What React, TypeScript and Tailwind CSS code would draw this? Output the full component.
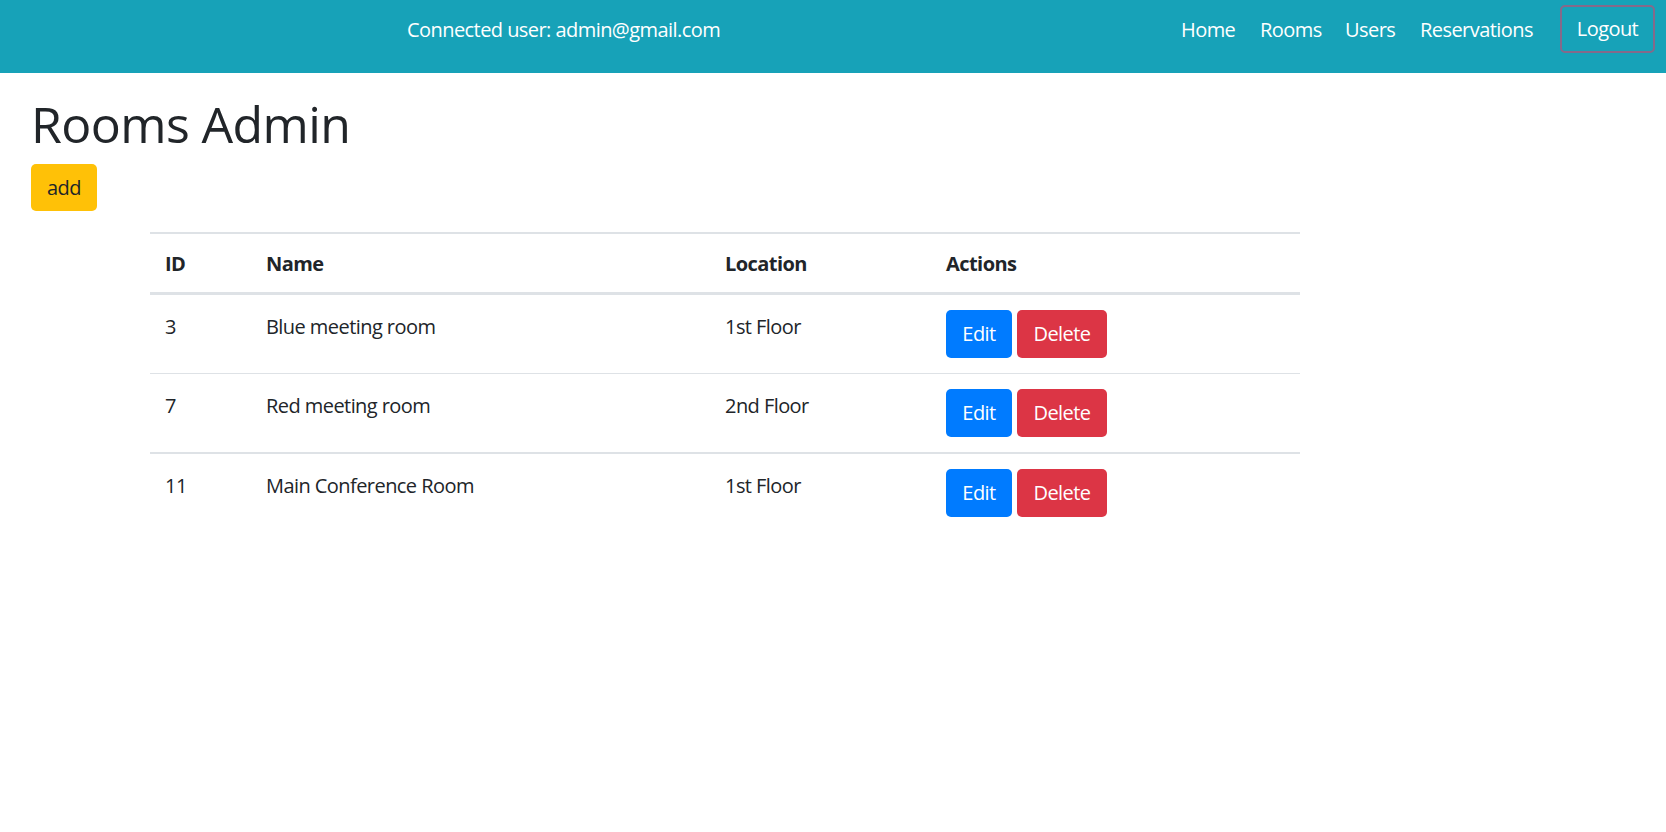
const rooms = [
  { id: 3, name: 'Blue meeting room', location: '1st Floor' },
  { id: 7, name: 'Red meeting room', location: '2nd Floor' },
  { id: 11, name: 'Main Conference Room', location: '1st Floor' },
];

const font = { fontFamily: '"Segoe UI", "Open Sans", "Noto Sans", sans-serif' };

function Navbar() {
  return (
    <nav className="flex h-[73px] items-start bg-[#17a2b8] pt-[6px] text-[20px] text-white">
      <div className="flex h-[48px] items-center pl-[407px]">Connected user: admin@gmail.com</div>
      <div className="flex-1" />
      <a className="flex h-[48px] w-[79px] items-center">Home</a>
      <a className="flex h-[48px] w-[85px] items-center">Rooms</a>
      <a className="flex h-[48px] w-[75px] items-center">Users</a>
      <a className="flex h-[48px] w-[140px] items-center">Reservations</a>
      <button className="mt-[-1px] mr-[11px] flex h-[48px] w-[95px] items-center justify-center rounded-[5px] border-2 border-[#86698a] text-white">
        Logout
      </button>
    </nav>
  );
}

export default function App() {
  return (
    <div className="min-h-screen bg-white text-[20px] tracking-[-0.028em] text-[#212529]" style={font}>
      <Navbar />

      <main className="pl-[31px]">
        <h1 className="mt-[21px] mb-[10px] h-[60px] text-[50px] leading-[60px] font-medium tracking-[-0.012em]">
          Rooms Admin
        </h1>
        <button className="h-[47px] w-[66px] rounded-[5px] bg-[#ffc107] text-[20px] text-[#212529]">add</button>
      </main>

      {/* Rooms table */}
      <table className="mt-[21px] ml-[150px] w-[1150px] table-fixed border-collapse text-left">
        <colgroup>
          <col className="w-[101px]" />
          <col className="w-[459px]" />
          <col className="w-[221px]" />
          <col className="w-[369px]" />
        </colgroup>
        <thead>
          <tr className="border-t-2 border-b-[3px] border-[#dee2e6]">
            <th className="h-[60px] px-[15px] pt-[3px] align-middle font-bold">ID</th>
            <th className="px-[15px] pt-[3px] align-middle font-bold">Name</th>
            <th className="px-[15px] pt-[3px] align-middle font-bold">Location</th>
            <th className="px-[15px] pt-[3px] align-middle font-bold">Actions</th>
          </tr>
        </thead>
        <tbody>
          {rooms.map((room, i) => (
            <tr
              key={room.id}
              className={
                i === 0 ? 'border-b border-[#dee2e6]' : i === 1 ? 'border-b-2 border-[#dee2e6]' : ''
              }
            >
              <td className="px-[15px] pt-[17px] pb-[13px] align-top leading-[30px]">{room.id}</td>
              <td className="px-[15px] pt-[17px] pb-[13px] align-top leading-[30px]">{room.name}</td>
              <td className="px-[15px] pt-[17px] pb-[13px] align-top leading-[30px]">{room.location}</td>
              <td className="px-[15px] py-[15px] align-top">
                <div className="flex gap-[5px]">
                  <button className="h-[48px] w-[66px] rounded-[5px] bg-[#007bff] text-white">Edit</button>
                  <button className="h-[48px] w-[90px] rounded-[5px] bg-[#dc3545] text-white">Delete</button>
                </div>
              </td>
            </tr>
          ))}
        </tbody>
      </table>
    </div>
  );
}
